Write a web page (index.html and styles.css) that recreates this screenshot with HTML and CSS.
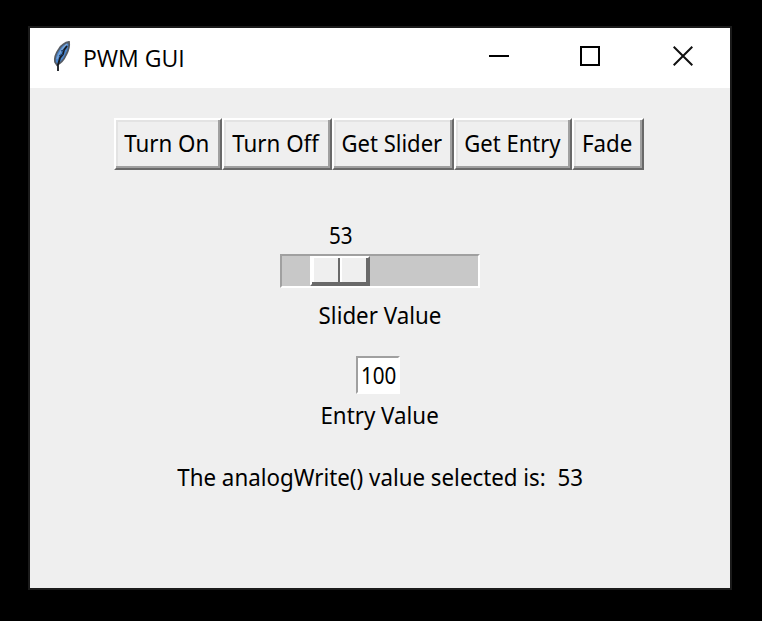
FILE: index.html
```html
<!DOCTYPE html>
<html lang="en">
<head>
<meta charset="utf-8">
<title>PWM GUI</title>
<link rel="stylesheet" href="styles.css">
</head>
<body>
<main class="window">
  <header class="titlebar">
    <svg class="feather" width="20" height="34" viewBox="0 0 20 34">
      <path d="M17 2 Q11 3 7 9 Q2 16 3 22 L5 25 Q11 22 14 15 Q18 8 17 2Z" fill="#4a86ce" stroke="#555b64" stroke-width="1.8"/>
      <path d="M15 4 Q8 10 5 19" fill="none" stroke="#83a9d5" stroke-width="1.2"/>
      <path d="M15 6 L12 10 L11 14 L8 18 L6 25 L6 31" fill="none" stroke="#15191f" stroke-width="1.8"/>
      <path d="M9 11 L12 10 M7 16 L11 14" stroke="#203f69" stroke-width="1.3"/>
    </svg>
    <h1 class="title">PWM GUI</h1>
    <div class="controls">
      <svg width="20" height="20" viewBox="0 0 20 20"><path d="M0 10H20" stroke="#000" stroke-width="2"/></svg>
      <svg class="maximize" width="20" height="20" viewBox="0 0 20 20"><path d="M1 1H19V19H1Z" fill="none" stroke="#000" stroke-width="2"/></svg>
      <svg width="20" height="20" viewBox="0 0 20 20"><path d="M.7 .7L19.3 19.3M19.3 .7L.7 19.3" stroke="#111" stroke-width="2"/></svg>
    </div>
  </header>
  <nav class="toolbar">
    <button class="btn on"><span class="text">Turn On</span></button>
    <button class="btn off"><span class="text">Turn Off</span></button>
    <button class="btn get-slider"><span class="text">Get Slider</span></button>
    <button class="btn get-entry"><span class="text">Get Entry</span></button>
    <button class="btn fade"><span class="text">Fade</span></button>
  </nav>
  <section class="scale">
    <div class="scale-value"><span class="text digits">53</span></div>
    <div class="trough"><div class="thumb"><i></i><i></i></div></div>
    <div class="label"><span class="text">Slider Value</span></div>
  </section>
  <section class="entry-group">
    <div class="entry"><span class="text digits">100</span></div>
    <div class="label"><span class="text">Entry Value</span></div>
  </section>
  <p class="status"><span class="text">The analogWrite() value selected is:&nbsp; 53</span></p>
</main>
</body>
</html>
```
FILE: styles.css
```css
* { box-sizing: border-box; }
body { margin: 0; height: 621px; padding: 26px 0 0 28px; background: #000; overflow: hidden; }
.window { width: 704px; height: 564px; border: 2px solid #1b1b1b; background: #efefef; color: #000; font: 24px/34px "Noto Sans", sans-serif; }
.titlebar { display: flex; height: 60px; background: #fff; }
.feather { margin: 12px 0 0 22px; }
.title { margin: 13px 0 0 11px; font: 23.5px/34px "Open Sans", sans-serif; white-space: nowrap; transform: scaleX(.98); transform-origin: left; }
.controls { display: flex; margin: 18px 37px 0 auto; }
.maximize { margin: 0 73px 0 71px; }
.toolbar { display: flex; margin: 30px 0 0 84px; }
.btn { display: flex; justify-content: center; height: 52px; padding: 6px 2px 0 0; border: 2px solid; border-color: #fff #696969 #696969 #fff; background: #efefef; box-shadow: inset -2px -2px #a0a0a0, inset 2px 2px #e3e3e3; color: #000; font: inherit; }
.on { width: 108px; }
.off { width: 110px; }
.get-slider { width: 122px; }
.get-entry { width: 118px; }
.fade { width: 72px; }
.text { display: inline-block; flex: none; white-space: nowrap; transform: scaleX(.93); }
.get-slider .text, .get-entry .text { transform: scaleX(.918); }
.text.digits { transform: translateX(1px) scaleX(.86); }
.scale { width: 200px; margin: 48px auto 0 250px; }
.scale-value { width: 120px; height: 36px; text-align: center; }
.trough { height: 34px; padding-left: 28px; border: 2px solid; border-color: #a0a0a0 #fff #fff #a0a0a0; background: #c8c8c8; }
.thumb { display: flex; width: 60px; height: 30px; border: 2px solid; border-color: #fff #696969 #696969 #fff; box-shadow: inset -2px -2px #696969; background: #efefef; }
.thumb i { width: 28px; height: 24px; border-left: 2px solid #fff; }
.thumb i:first-child { border-right: 2px solid #696969; }
.label { display: flex; justify-content: center; height: 34px; }
.scale .label { margin-top: 10px; }
.entry-group { width: 200px; margin: 24px 0 0 250px; }
.entry { display: flex; justify-content: center; width: 44px; height: 38px; margin-left: 76px; border: 2px solid; border-color: #a0a0a0 #fff #fff #a0a0a0; background: #fff; }
.entry-group .label { margin-top: 4px; }
.status { display: flex; justify-content: center; margin: 28px 0 0; }
```
